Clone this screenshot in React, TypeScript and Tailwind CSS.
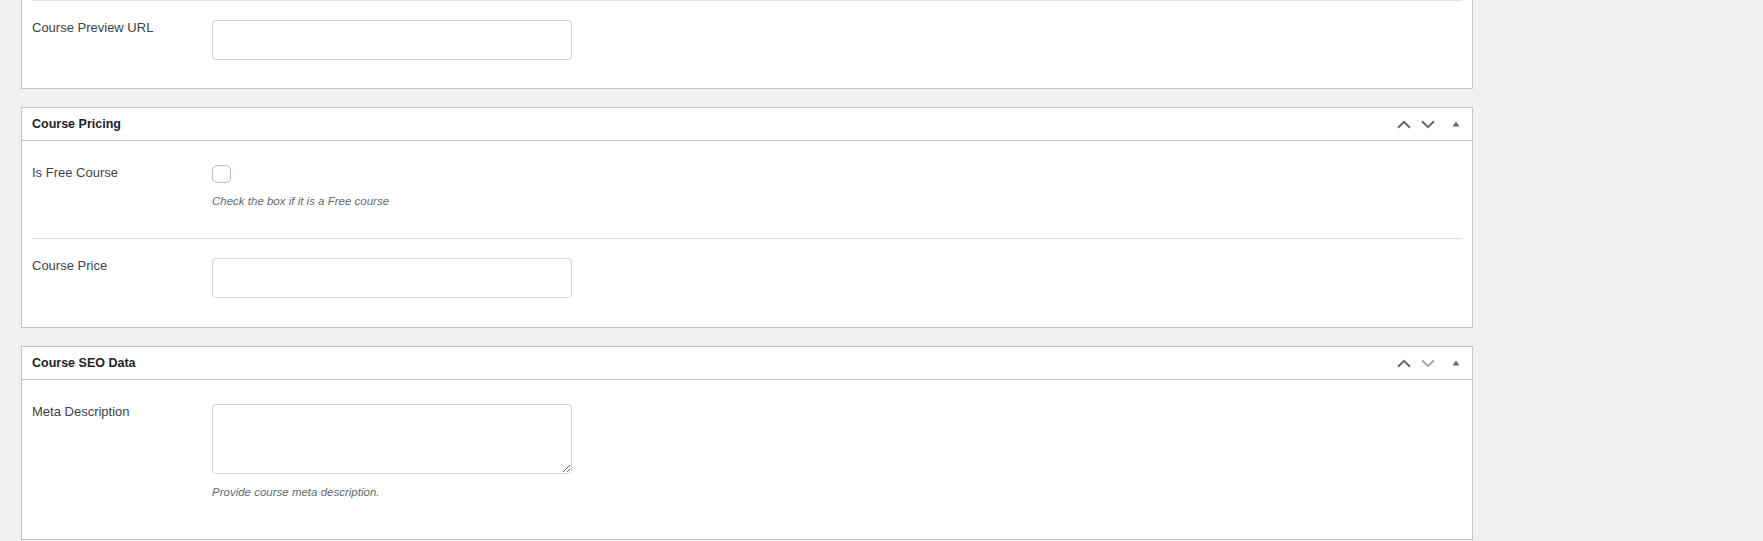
import type { ReactNode } from 'react';

type IconProps = { muted?: boolean };

function ChevronUp({ muted }: IconProps) {
  return (
    <svg width="14" height="9" viewBox="0 0 14 9" fill="none">
      <path d="M1 7.8 7 1.8l6 6" stroke={muted ? '#a7aaad' : '#646970'} strokeWidth="2" />
    </svg>
  );
}

function ChevronDown({ muted }: IconProps) {
  return (
    <svg width="14" height="9" viewBox="0 0 14 9" fill="none">
      <path d="M1 1.2l6 6 6-6" stroke={muted ? '#a7aaad' : '#646970'} strokeWidth="2" />
    </svg>
  );
}

function ToggleArrow() {
  return (
    <svg width="8" height="6" viewBox="0 0 8 6">
      <path d="M0.5 5.5 4 0.5l3.5 5z" fill="#646970" />
    </svg>
  );
}

interface PostboxProps {
  title?: string;
  downDisabled?: boolean;
  children: ReactNode;
}

function Postbox({ title, downDisabled, children }: PostboxProps) {
  return (
    <div
      className={`ml-[21px] w-[1452px] bg-white border-x border-b border-[#c3c4c7] ${title ? 'border-t' : ''}`}
    >
      {title && (
        <div className="flex items-center justify-between h-[33px] border-b border-[#c3c4c7] pl-[10px]">
          <h2 className="text-[12.5px] font-bold text-[#1d2327]">{title}</h2>
          <div className="flex h-full">
            <button className="w-[24px] flex items-center justify-center" aria-label="Move up">
              <ChevronUp />
            </button>
            <button className="w-[24px] flex items-center justify-center" aria-label="Move down">
              <ChevronDown muted={downDisabled} />
            </button>
            <button className="w-[32px] flex items-center justify-center" aria-label="Toggle panel">
              <ToggleArrow />
            </button>
          </div>
        </div>
      )}
      <div className={`px-[10px] pb-[10px] ${title ? 'pt-[5px]' : ''}`}>{children}</div>
    </div>
  );
}

interface FieldProps {
  label: string;
  help?: string;
  last?: boolean;
  children: ReactNode;
}

function Field({ label, help, last, children }: FieldProps) {
  return (
    <div className={`flex pt-[19px] pb-[19px] ${last ? '' : 'border-b border-[#e2e2e4]'}`}>
      <label className="w-[180px] shrink-0 text-[13px] leading-[16px] text-[#3c434a]">{label}</label>
      <div>
        {children}
        {help && (
          <p className="mt-[9px] mb-[9px] text-[11.5px] leading-[18px] italic text-[#646970]">{help}</p>
        )}
      </div>
    </div>
  );
}

const inputCls = 'block w-[360px] rounded-[4px] border border-[#d6d6d9] bg-white';

export default function App() {
  return (
    <div className="min-h-screen w-full bg-[#f0f0f1] font-['Liberation_Sans',Arial,sans-serif]">
      <div className="flex flex-col gap-[18px]">
        {/* top box is scrolled off, only its last row shows */}
        <Postbox>
          <div className="flex pt-[19px] pb-[18px] border-t border-[#e2e2e4]">
            <label className="w-[180px] shrink-0 text-[13px] leading-[16px] text-[#3c434a]">
              Course Preview URL
            </label>
            <input type="text" className={`${inputCls} h-[40px]`} />
          </div>
        </Postbox>

        <Postbox title="Course Pricing">
          <Field label="Is Free Course" help="Check the box if it is a Free course">
            <input
              type="checkbox"
              className="block appearance-none w-[19px] h-[18px] rounded-[5px] border border-[#b3b8de] bg-white"
            />
          </Field>
          <Field label="Course Price" last>
            <input type="text" className={`${inputCls} h-[40px]`} />
          </Field>
        </Postbox>

        <Postbox title="Course SEO Data" downDisabled>
          <Field label="Meta Description" help="Provide course meta description." last>
            <textarea className={`${inputCls} h-[70px]`} />
          </Field>
        </Postbox>
      </div>
    </div>
  );
}
